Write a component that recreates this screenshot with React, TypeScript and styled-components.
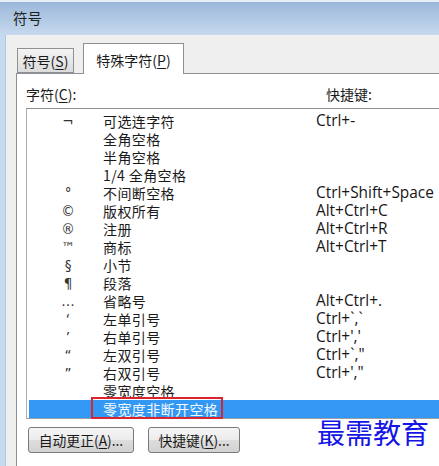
import React from "react";
import styled, { createGlobalStyle } from "styled-components";

const Global = createGlobalStyle`
  html, body { margin: 0; padding: 0; background: #ffffff; }
  body { font-family: "Noto Sans CJK SC", "Noto Sans", sans-serif; }
`;

const Window = styled.div`
  position: relative;
  width: 439px;
  height: 466px;
  overflow: hidden;
  display: flex;
  flex-direction: column;
  background: #f0f0f0;
`;

const TitleBar = styled.div`
  height: 35px;
  flex: none;
  box-sizing: border-box;
  padding-left: 13px;
  padding-bottom: 2px;
  display: flex;
  align-items: center;
  border-top: 2px solid #e6eef8;
  background: linear-gradient(#9cb8d9, #c6d9ee);
  font-size: 14.4px;
  color: #1e1e1e;
`;

const Body = styled.div`
  flex: 1;
  display: flex;
  min-height: 0;
`;

const FrameEdge = styled.div`
  width: 5px;
  flex: none;
  background: #c6daef;
  border-right: 1px solid #b4c6da;
`;

const Client = styled.div`
  flex: 1;
  display: flex;
  flex-direction: column;
  padding: 9px 0 0 10px;
  background: #efefef;
  min-width: 0;
`;

const TabStrip = styled.div`
  display: flex;
  align-items: flex-end;
  height: 29px;
  gap: 9px;
  padding-left: 1px;
  position: relative;
  z-index: 1;
`;

const Tab = styled.div<{ $active?: boolean }>`
  box-sizing: border-box;
  display: flex;
  align-items: center;
  justify-content: center;
  height: ${(p) => (p.$active ? "31px" : "25px")};
  width: ${(p) => (p.$active ? "101px" : "57px")};
  margin-bottom: ${(p) => (p.$active ? "-1px" : "0")};
  border: 1px solid #8d9094;
  border-bottom: ${(p) => (p.$active ? "none" : "1px solid #8d9094")};
  background: ${(p) =>
    p.$active ? "#ffffff" : "linear-gradient(#f4f4f4, #dcdcdc)"};
  font-size: 14px;
  color: #1a1a1a;
  padding-top: ${(p) => (p.$active ? "2px" : "0")};
`;

const Key = styled.span`
  text-decoration: underline;
  text-underline-offset: 2px;
`;

const Panel = styled.div`
  flex: 1;
  border-top: 1px solid #8d9094;
  border-left: 1px solid #8d9094;
  background: #ffffff;
  padding-left: 9px;
  display: flex;
  flex-direction: column;
`;

const HeaderRow = styled.div`
  height: 34px;
  display: grid;
  grid-template-columns: 300px 1fr;
  align-items: center;
  padding-top: 5px;
  box-sizing: border-box;
  font-size: 14px;
  color: #1a1a1a;
`;

const HeaderRight = styled.span`
  padding-left: 0;
`;

const ListBox = styled.div`
  box-sizing: border-box;
  height: 311px;
  border-top: 1px solid #8a8f96;
  border-left: 1px solid #a8adb4;
  border-bottom: 1px solid #9a9fa6;
  padding: 3px 0 0 2px;
  background: #ffffff;
`;

const Row = styled.div<{ $selected?: boolean }>`
  position: relative;
  height: 18px;
  display: grid;
  grid-template-columns: 74px 213px 1fr;
  align-items: center;
  background: ${(p) => (p.$selected ? "#3398f4" : "transparent")};
  color: ${(p) => (p.$selected ? "#f4f8ff" : "#1a1a1a")};
  line-height: 18px;
  white-space: nowrap;
`;

const Sym = styled.span`
  padding-left: 4px;
  text-align: center;
  font-family: "DejaVu Sans", sans-serif;
  font-size: 13.5px;
  color: #333333;
`;

const Name = styled.span`
  font-size: 14px;
  letter-spacing: 0.4px;
`;

const Shortcut = styled.span`
  font-family: "Open Sans", "Noto Sans", sans-serif;
  font-size: 15.4px;
  color: #161616;
`;

const Annotation = styled.div`
  position: absolute;
  left: 62px;
  top: -3px;
  width: 132px;
  height: 22px;
  box-sizing: border-box;
  border: 2px solid #d9262e;
`;

const ButtonRow = styled.div`
  display: flex;
  gap: 14px;
  padding: 8px 0 0 2px;
`;

const Button = styled.button<{ $w: number }>`
  box-sizing: border-box;
  width: ${(p) => p.$w}px;
  height: 26px;
  border: 1px solid #7a7a7a;
  border-radius: 3px;
  background: linear-gradient(#f6f6f6 0%, #ebebeb 50%, #dddddd 51%, #d2d2d2 100%);
  font-family: "Noto Sans CJK SC", sans-serif;
  font-size: 13.8px;
  color: #1a1a1a;
  padding: 0;
  display: flex;
  align-items: center;
  justify-content: center;
`;

const Watermark = styled.div`
  position: absolute;
  left: 317px;
  top: 414px;
  font-family: "Noto Sans CJK SC", serif;
  font-size: 28px;
  line-height: 36px;
  color: #1414e6;
  letter-spacing: 0;
`;

type Item = { sym: string; name: string; key?: string };

const items: Item[] = [
  { sym: "¬", name: "可选连字符", key: "Ctrl+-" },
  { sym: "", name: "全角空格" },
  { sym: "", name: "半角空格" },
  { sym: "", name: "1/4 全角空格" },
  { sym: "°", name: "不间断空格", key: "Ctrl+Shift+Space" },
  { sym: "©", name: "版权所有", key: "Alt+Ctrl+C" },
  { sym: "®", name: "注册", key: "Alt+Ctrl+R" },
  { sym: "™", name: "商标", key: "Alt+Ctrl+T" },
  { sym: "§", name: "小节" },
  { sym: "¶", name: "段落" },
  { sym: "…", name: "省略号", key: "Alt+Ctrl+." },
  { sym: "‘", name: "左单引号", key: "Ctrl+`,`" },
  { sym: "’", name: "右单引号", key: "Ctrl+','" },
  { sym: "“", name: "左双引号", key: "Ctrl+`,\"" },
  { sym: "”", name: "右双引号", key: "Ctrl+',\"" },
  { sym: "", name: "零宽度空格" },
  { sym: "", name: "零宽度非断开空格" },
];

export default function App() {
  return (
    <>
      <Global />
      <Window>
        <TitleBar>符号</TitleBar>
        <Body>
          <FrameEdge />
          <Client>
            <TabStrip>
              <Tab>
                符号(<Key>S</Key>)
              </Tab>
              <Tab $active>
                特殊字符(<Key>P</Key>)
              </Tab>
            </TabStrip>
            <Panel>
              <HeaderRow>
                <span>
                  字符(<Key>C</Key>):
                </span>
                <HeaderRight>快捷键:</HeaderRight>
              </HeaderRow>
              <ListBox>
                {items.map((it, i) => {
                  const selected = i === items.length - 1;
                  return (
                    <Row key={i} $selected={selected}>
                      <Sym>{it.sym}</Sym>
                      <Name>{it.name}</Name>
                      <Shortcut>{it.key ?? ""}</Shortcut>
                      {selected && <Annotation />}
                    </Row>
                  );
                })}
              </ListBox>
              <ButtonRow>
                <Button $w={106}>
                  自动更正(<Key>A</Key>)...
                </Button>
                <Button $w={92}>
                  快捷键(<Key>K</Key>)...
                </Button>
              </ButtonRow>
            </Panel>
          </Client>
        </Body>
        <Watermark>最需教育</Watermark>
      </Window>
    </>
  );
}
